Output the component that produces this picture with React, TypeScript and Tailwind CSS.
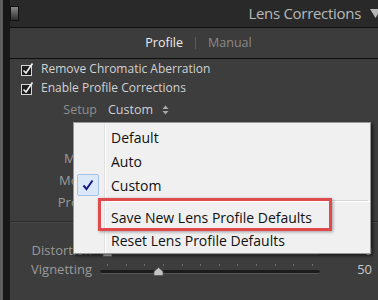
import React from 'react';

const CheckBox = () => (
  <svg width="14" height="14" viewBox="0 0 14 14" className="shrink-0">
    <rect x="0.5" y="3.5" width="10" height="10" fill="#1d1d1d" stroke="#d6d6d6" />
    <path d="M2.5 8.5 L5 11 L11.5 1.5" fill="none" stroke="#f2f2f2" strokeWidth="1.6" />
  </svg>
);

const Slider = ({ pos }: { pos: number }) => (
  <div className="relative w-[220px] h-[18px] shrink-0">
    <div className="absolute left-[7px] right-[7px] top-[3px] flex justify-between">
      {Array.from({ length: 12 }).map((_, i) => (
        <div key={i} className="w-px h-[2px] bg-[#6a6a6a]" />
      ))}
    </div>
    <div className="absolute left-0 right-0 top-[9px] h-[4px] rounded-full bg-[#1c1c1c] border-b border-[#555]" />
    <svg
      width="11"
      height="9"
      viewBox="0 0 11 9"
      className="absolute top-[6px]"
      style={{ left: pos - 5 }}
    >
      <path d="M5.5 0.5 L10 4.5 L10 8.5 L1 8.5 L1 4.5 Z" fill="#c4c4c4" stroke="#555" strokeWidth="0.8" />
    </svg>
  </div>
);

const menuItems = ['Default', 'Auto', 'Custom'];

export default function App() {
  return (
    <div className="relative w-[378px] h-[300px] overflow-hidden flex bg-[#3d3d3d] font-['Open_Sans',sans-serif]">
      <div className="w-[3px] shrink-0 bg-[#5e5e5e]" />
      <div className="w-[7px] shrink-0 bg-[#181818]" />

      <div className="flex-1 flex flex-col min-w-0">
        {/* header */}
        <div className="h-[27px] bg-[#292929] flex items-center shrink-0">
          <div className="w-[9px] h-[15px] border border-[#111] bg-gradient-to-b from-[#8a8a8a] via-[#5a5a5a] to-[#2e2e2e] shrink-0" />
          <div className="flex-1" />
          <span className="text-[15px] text-[#b9b9b9] tracking-[-0.3px] leading-none">Lens Corrections</span>
          <svg width="11" height="9" viewBox="0 0 11 9" className="ml-[9px] mr-[-3px] shrink-0">
            <path d="M0 0 L11 0 L5.5 9 Z" fill="#b5b5b5" />
          </svg>
        </div>
        <div className="h-px bg-[#0e0e0e] shrink-0" />

        {/* tabs */}
        <div className="h-[30px] bg-[#3c3c3c] flex items-center justify-center shrink-0 pl-[9px]">
          <span className="text-[12.5px] text-[#ececec]">Profile</span>
          <span className="mx-[12px] w-px h-[12px] bg-[#5c5c5c]" />
          <span className="text-[12.5px] text-[#8a8a8a]">Manual</span>
        </div>
        <div className="h-px bg-[#0e0e0e] shrink-0" />

        {/* body */}
        <div className="flex flex-col text-[12px]">
          <div className="h-[19px] flex items-center pl-[11px] gap-[6px]">
            <CheckBox />
            <span className="text-[#d2d2d2]">Remove Chromatic Aberration</span>
          </div>
          <div className="h-[19px] flex items-center pl-[11px] gap-[6px]">
            <CheckBox />
            <span className="text-[#d2d2d2]">Enable Profile Corrections</span>
          </div>
          <div className="h-[20px] mt-[3px] flex items-center text-[12.5px]">
            <span className="w-[87px] text-right text-[#8f8f8f]">Setup</span>
            <span className="ml-[11px] text-[#d0d0d0]">Custom</span>
            <svg width="7" height="10" viewBox="0 0 7 10" className="ml-[9px]">
              <path d="M0.5 4 L3.5 0.5 L6.5 4 Z M0.5 6 L3.5 9.5 L6.5 6 Z" fill="#aaa" />
            </svg>
          </div>

          <div className="mt-[28px] flex flex-col text-[13px] text-[#9a9a9a]">
            <div className="h-[22px] flex items-center"><span className="w-[87px] text-right">Make</span></div>
            <div className="h-[22px] flex items-center"><span className="w-[87px] text-right">Model</span></div>
            <div className="h-[22px] flex items-center"><span className="w-[87px] text-right">Profile</span></div>
          </div>

          <div className="mt-[7px] h-px bg-[#2c2c2c]" />
          <div className="h-px bg-[#494949]" />

          <div className="mt-[19px] flex flex-col text-[13px] text-[#9a9a9a]">
            <div className="h-[18px] flex items-center">
              <span className="w-[82px] text-right">Distortion</span>
              <div className="ml-[8px]"><Slider pos={7} /></div>
              <span className="flex-1 text-right pr-[6px] text-[#c8c8c8]">0</span>
            </div>
            <div className="h-[19px] flex items-center">
              <span className="w-[82px] text-right">Vignetting</span>
              <div className="ml-[8px]"><Slider pos={58} /></div>
              <span className="flex-1 text-right pr-[6px] text-[#c8c8c8]">50</span>
            </div>
          </div>
        </div>
      </div>

      {/* popup menu */}
      <div className="absolute left-[73px] top-[122px] w-[298px] h-[132px] bg-[#f0f0f0] border border-[#979797] shadow-[2px_2px_3px_rgba(0,0,0,0.55)] flex text-[14px] text-[#111]">
        <div className="w-[30px] shrink-0 flex flex-col pt-[2px]">
          <div className="h-[48px]" />
          <div className="h-[24px] flex items-center pl-[3px]">
            <div className="w-[22px] h-[22px] rounded-[2px] bg-[#dbe8f8] border border-[#a6c4ea] flex items-center justify-center">
              <svg width="12" height="12" viewBox="0 0 12 12">
                <path d="M1.5 6.5 L4.5 10 L10.5 1.5" fill="none" stroke="#1b1b8c" strokeWidth="2" />
              </svg>
            </div>
          </div>
        </div>
        <div className="w-px bg-[#e0e0e0] shrink-0" />
        <div className="w-px bg-white shrink-0" />
        <div className="flex-1 flex flex-col pt-[2px]">
          {menuItems.map((m) => (
            <div key={m} className="h-[24px] flex items-center pl-[5px]">{m}</div>
          ))}
          <div className="mt-[3px] mr-[2px] h-px bg-[#d7d7d7]" />
          <div className="h-px bg-white" />
          <div className="mt-[3px] h-[24px] flex items-center pl-[5px]">Save New Lens Profile Defaults</div>
          <div className="h-[23px] flex items-center pl-[5px]">Reset Lens Profile Defaults</div>
        </div>

        <div className="absolute left-[24px] top-[75px] w-[234px] h-[33px] border-[3px] border-[#e04a4c] shadow-[1px_1px_3px_rgba(0,0,0,0.35)]" />
      </div>
    </div>
  );
}
